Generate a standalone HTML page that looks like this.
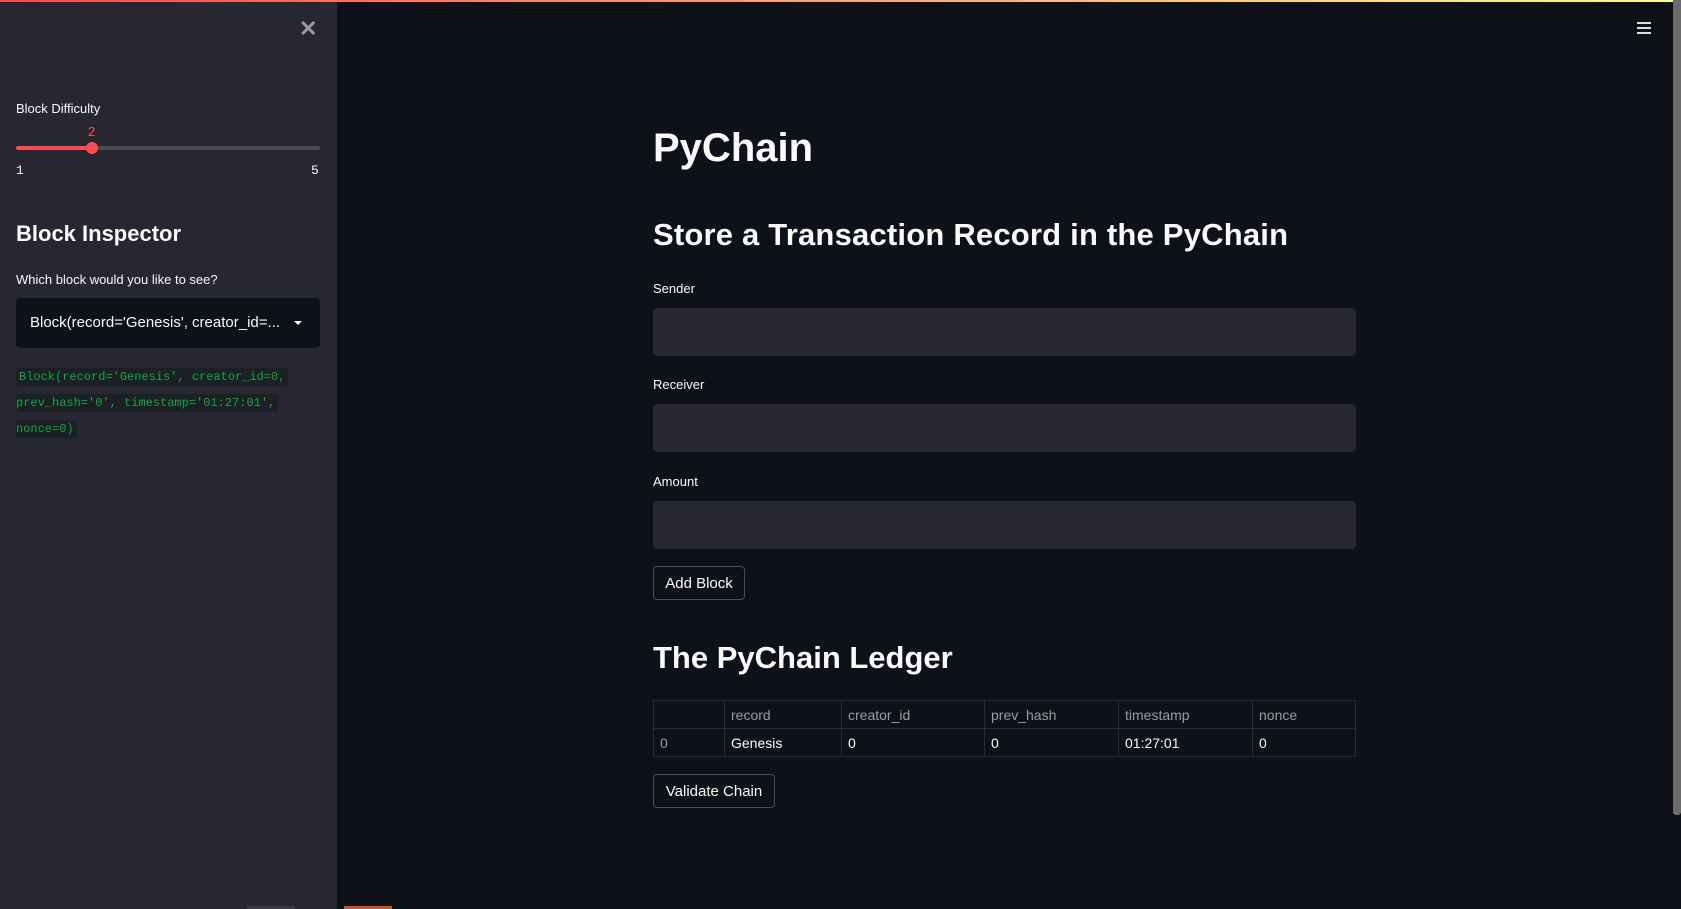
<!DOCTYPE html>
<html><head><meta charset="utf-8"><style>
*{margin:0;padding:0;box-sizing:border-box}
body{width:1681px;height:909px;overflow:hidden;background:#0e1117;font-family:"Liberation Sans",sans-serif;color:#fafafa;position:relative}
.a{position:absolute;white-space:nowrap}
#top{left:0;top:0;width:1681px;height:2px;background:linear-gradient(90deg,#ff4b4b,#fffd80)}
#side{left:0;top:2px;width:337px;height:907px;background:#262730}
.lbl{font-size:13px;color:#fafafa}
.inp{background:#262730;border-radius:4px;left:653px;width:703px;height:48px}
.btn{border:1px solid #4a4c55;border-radius:4px;background:#0e1117;font-size:15px;color:#fafafa;display:flex;align-items:center;justify-content:center}
.code{font-family:"Liberation Mono",monospace;font-size:12px;color:#09ab3b;background:#1d1f26;padding:2px 3px;border-radius:3px}
table{border-collapse:collapse;font-size:14px}
td{border:1px solid #2a2c33;height:28px;padding:0 6px}
</style></head><body>
<div id="top" class="a"></div>
<div id="side" class="a"></div>
<div class="a" style="left:299px;top:16px;font-size:22px;color:#9a9ba0;font-weight:bold">✕</div>
<div class="a lbl" style="left:16px;top:101px">Block Difficulty</div>
<div class="a" style="left:88px;top:124px;font-size:13px;color:#ff4b4b">2</div>
<div class="a" style="left:16px;top:146px;width:304px;height:4px;background:#4a4b55;border-radius:2px"></div>
<div class="a" style="left:16px;top:146px;width:76px;height:4px;background:#ff4b4b;border-radius:2px"></div>
<div class="a" style="left:86px;top:142px;width:12px;height:12px;background:#ff4b4b;border-radius:50%"></div>
<div class="a" style="left:16px;top:163px;font-size:13px;font-family:'Liberation Mono',monospace">1</div>
<div class="a" style="left:311px;top:163px;font-size:13px;font-family:'Liberation Mono',monospace">5</div>
<div class="a" style="left:16px;top:221px;font-size:22px;font-weight:bold">Block Inspector</div>
<div class="a lbl" style="left:16px;top:272px">Which block would you like to see?</div>
<div class="a" style="left:16px;top:298px;width:304px;height:50px;background:#0e1117;border-radius:4px"></div>
<div class="a" style="left:30px;top:314px;font-size:15px">Block(record='Genesis', creator_id=...</div>
<div class="a" style="left:294px;top:321px;width:0;height:0;border-left:4px solid transparent;border-right:4px solid transparent;border-top:4px solid #fafafa"></div>
<div class="a code" style="left:16px;top:368px">Block(record='Genesis', creator_id=0,</div>
<div class="a code" style="left:16px;top:394px;padding-left:0">prev_hash='0', timestamp='01:27:01',</div>
<div class="a code" style="left:16px;top:420px;padding-left:0">nonce=0)</div>
<div class="a" style="left:1673px;top:0;width:8px;height:815px;background:#6b6b6b;border-radius:0 0 3px 3px"></div>
<div class="a" style="left:1637px;top:22px;width:14px;height:2px;background:#ddd;box-shadow:0 5px 0 #ddd,0 10px 0 #ddd"></div>
<div class="a" style="left:653px;top:126px;font-size:40px;font-weight:bold">PyChain</div>
<div class="a" style="left:653px;top:217px;font-size:31px;font-weight:bold;letter-spacing:0.2px">Store a Transaction Record in the PyChain</div>
<div class="a lbl" style="left:653px;top:281px">Sender</div>
<div class="a inp" style="top:308px"></div>
<div class="a lbl" style="left:653px;top:377px">Receiver</div>
<div class="a inp" style="top:404px"></div>
<div class="a lbl" style="left:653px;top:474px">Amount</div>
<div class="a inp" style="top:501px"></div>
<div class="a btn" style="left:653px;top:566px;width:92px;height:34px">Add Block</div>
<div class="a" style="left:653px;top:640px;font-size:31px;font-weight:bold">The PyChain Ledger</div>
<table class="a" style="left:653px;top:700px;width:703px">
<tr style="color:#9a9ca3"><td style="width:71px"></td><td style="width:117px">record</td><td style="width:143px">creator_id</td><td style="width:134px">prev_hash</td><td style="width:134px">timestamp</td><td>nonce</td></tr>
<tr><td style="color:#9a9ca3">0</td><td>Genesis</td><td>0</td><td>0</td><td>01:27:01</td><td>0</td></tr>
</table>
<div class="a btn" style="left:653px;top:774px;width:122px;height:34px">Validate Chain</div>
<div class="a" style="left:247px;top:906px;width:48px;height:3px;background:#3a3b42"></div>
<div class="a" style="left:344px;top:906px;width:48px;height:3px;background:#c0562a"></div>
</body></html>
